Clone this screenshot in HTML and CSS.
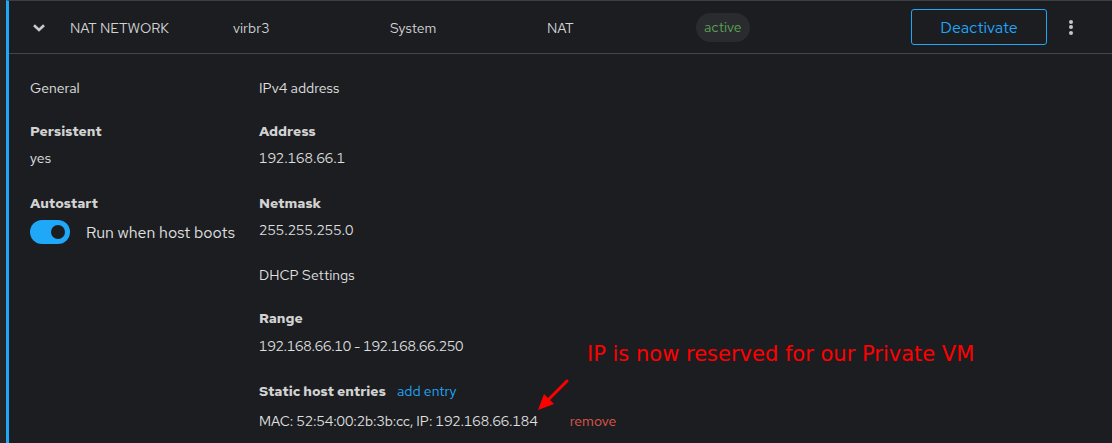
FILE: index.html
```html
<!DOCTYPE html>
<html>
<head>
<meta charset="utf-8">
<link rel="stylesheet" href="styles.css">
</head>
<body>
<div class="page">
  <div class="edge"></div>
  <div class="card">
    <div class="row">
      <div class="cell toggle-cell">
        <svg class="chev" width="12" height="8" viewBox="0 0 12 8"><path d="M1 1.2 L6 6 L11 1.2" fill="none" stroke="#c9c9c9" stroke-width="2.6" stroke-linejoin="miter"/></svg>
      </div>
      <div class="cell txt c-name">NAT NETWORK</div>
      <div class="cell txt c-dev">virbr3</div>
      <div class="cell txt c-conn">System</div>
      <div class="cell txt c-mode">NAT</div>
      <div class="cell txt c-state"><span class="badge">active</span></div>
      <div class="cell c-actions">
        <button class="btn">Deactivate</button>
        <span class="kebab"><i></i><i></i><i></i></span>
      </div>
    </div>
    <div class="body">
      <div class="col col1">
        <div class="title">General</div>
        <div class="term">Persistent</div>
        <div class="val">yes</div>
        <div class="term">Autostart</div>
        <div class="val switch-row">
          <span class="switch"><span class="knob"></span></span>
          <span class="switch-label">Run when host boots</span>
        </div>
      </div>
      <div class="col col2">
        <div class="title">IPv4 address</div>
        <div class="term">Address</div>
        <div class="val">192.168.66.1</div>
        <div class="term">Netmask</div>
        <div class="val">255.255.255.0</div>
        <div class="title">DHCP Settings</div>
        <div class="term">Range</div>
        <div class="val range">192.168.66.10 - 192.168.66.250</div>
        <div class="term term-line">Static host entries <a class="link">add entry</a></div>
        <div class="val mac-line"><span class="mac">MAC: 52:54:00:2b:3b:cc, IP: 192.168.66.184</span> <a class="remove">remove</a></div>
      </div>
    </div>
  </div>
  <div class="note">IP is now reserved for our Private VM</div>
  <svg class="arrow" width="40" height="40" viewBox="0 0 40 40">
    <line x1="33" y1="4" x2="14" y2="23" stroke="#ff0000" stroke-width="3" stroke-linecap="round"/>
    <polygon points="4,33 10,17 20,27" fill="#ff0000"/>
  </svg>
</div>
</body>
</html>
```
FILE: styles.css
```css
html, body {
  margin: 0;
  padding: 0;
  background: #1b1d21;
}
body {
  width: 1112px;
  height: 443px;
  overflow: hidden;
  font-family: "Red Hat Text", "Lato", "Noto Sans", sans-serif;
  font-size: 14px;
  font-variant-numeric: tabular-nums;
  color: #e0e0e0;
}
.page {
  position: relative;
  display: flex;
  height: 443px;
}
.edge {
  width: 6px;
  background: #222427;
}
.card {
  flex: 1;
  border-left: 3px solid #1fa7f8;
  border-top: 1px solid #3c3f42;
  background: #1b1d21;
}
.row {
  display: flex;
  align-items: center;
  height: 52px;
  border-bottom: 1px solid #444548;
  color: #d2d2d2;
}
.cell { white-space: nowrap; }
.txt { padding-top: 2px; }
.toggle-cell {
  width: 61px;
  padding-left: 24px;
  padding-top: 1px;
  box-sizing: border-box;
  display: flex;
  align-items: center;
}
.chev { display: block; }
.c-name { width: 163px; }
.c-dev { width: 157px; }
.c-conn { width: 157px; }
.c-mode { width: 149px; }
.c-state { flex: 1; padding-top: 1px; }
.badge {
  display: inline-block;
  background: #292b2f;
  color: #5ba352;
  border-radius: 15px;
  padding: 5px 8px;
  line-height: 19px;
}
.c-actions {
  display: flex;
  align-items: center;
  padding-right: 38px;
}
.btn {
  font-family: inherit;
  font-size: 16px;
  color: #1fa7f8;
  background: transparent;
  border: 1px solid #1fa7f8;
  border-radius: 3px;
  width: 136px;
  height: 36px;
  padding: 0;
  margin-left: -1px;
}
.kebab {
  display: flex;
  flex-direction: column;
  gap: 1.5px;
  margin-left: 22px;
  margin-right: 1px;
}
.kebab i {
  display: block;
  width: 4px;
  height: 4px;
  border-radius: 50%;
  background: #c6c6c6;
}
.body {
  display: flex;
  padding-top: 24px;
}
.col { display: flex; flex-direction: column; }
.col1 { width: 229px; padding-left: 21px; }
.title { line-height: 21px; margin-bottom: 22px; color: #e0e0e0; }
.term {
  font-weight: 700;
  line-height: 21px;
  color: #d2d2d2;
}
.val {
  line-height: 21px;
  margin-top: 6px;
  margin-bottom: 24px;
}
.range { margin-top: 7px; letter-spacing: -0.2px; }
.switch-row {
  display: flex;
  align-items: center;
  margin-top: 6px;
}
.switch {
  position: relative;
  display: inline-block;
  width: 40px;
  height: 24px;
  border-radius: 12px;
  background: #1fa7f8;
}
.knob {
  position: absolute;
  right: 5px;
  top: 5px;
  width: 14px;
  height: 14px;
  border-radius: 50%;
  background: #1b1d21;
}
.switch-label {
  margin-left: 16px;
  font-size: 16px;
}
.term-line .link {
  font-weight: 400;
  color: #1fa7f8;
  margin-left: 8px;
}
.mac-line { margin-top: 9px; }
.mac { letter-spacing: -0.07px; }
.remove {
  color: #e0584b;
  margin-left: 29px;
}
.note {
  position: absolute;
  left: 587px;
  top: 342px;
  font-family: "DejaVu Sans", sans-serif;
  font-size: 21px;
  color: #ff0000;
  white-space: nowrap;
}
.arrow {
  position: absolute;
  left: 534px;
  top: 377px;
}
```
